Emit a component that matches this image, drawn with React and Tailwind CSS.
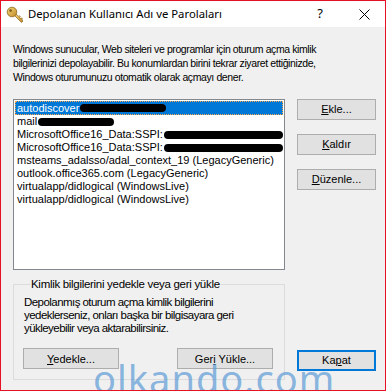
import React from 'react';

const ui = { fontFamily: '"Noto Sans", "Liberation Sans", sans-serif' };
const ms = { fontFamily: '"Liberation Sans", Arial, sans-serif' };

function KeyIcon() {
  return (
    <svg width="18" height="18" viewBox="0 0 18 18">
      <defs>
        <linearGradient id="kg" x1="0" y1="0" x2="1" y2="1">
          <stop offset="0" stopColor="#f6d97c" />
          <stop offset="1" stopColor="#c08a24" />
        </linearGradient>
      </defs>
      <path d="M8 9 L15.5 16.5 L17 15 L15.8 13.8 L16.6 13 L15.4 11.8 L14.6 12.6 L13.6 11.6 L14.4 10.8 L13.2 9.6 L12.4 10.4 L10 8" fill="url(#kg)" stroke="#8a6420" strokeWidth="0.7" strokeLinejoin="round" />
      <circle cx="6" cy="6" r="4.8" fill="url(#kg)" stroke="#8a6420" strokeWidth="0.8" />
      <circle cx="4.6" cy="4.6" r="1.3" fill="#7a5a1a" />
    </svg>
  );
}

function Btn({ children, className = '', primary = false }) {
  return (
    <div
      className={`flex items-center justify-center h-[21px] bg-[#e1e1e1] text-[11px] text-black ${
        primary ? 'border-2 border-[#0078d7]' : 'border border-[#adadad]'
      } ${className}`}
      style={ms}
    >
      {children}
    </div>
  );
}

function Redact({ w }) {
  return <span className={`inline-block h-[8px] ${w} bg-black rounded-full align-middle ml-[1px]`} />;
}

export default function App() {
  const items = [
    { text: 'autodiscover', redact: 'w-[86px]', selected: true },
    { text: 'mail', redact: 'w-[76px]' },
    { text: 'MicrosoftOffice16_Data:SSPI:', redact: 'w-[130px]' },
    { text: 'MicrosoftOffice16_Data:SSPI:', redact: 'w-[130px]' },
    { text: 'msteams_adalsso/adal_context_19 (LegacyGeneric)' },
    { text: 'outlook.office365.com (LegacyGeneric)' },
    { text: 'virtualapp/didlogical (WindowsLive)' },
    { text: 'virtualapp/didlogical (WindowsLive)' },
  ];

  return (
    <div className="relative w-[386px] h-[391px] border border-[#e81123] bg-[#f0f0f0] flex flex-col overflow-hidden">
      {/* title bar */}
      <div className="h-[26px] bg-white flex items-center shrink-0">
        <div className="ml-[5px] mt-[1px]">
          <KeyIcon />
        </div>
        <span className="ml-[4px] text-[11.3px] text-black" style={ui}>
          Depolanan Kullanıcı Adı ve Parolaları
        </span>
        <span className="ml-auto mr-[36px] text-[13px] text-black" style={ui}>?</span>
        <svg width="11" height="11" viewBox="0 0 11 11" className="mr-[15px]">
          <path d="M0.5 0.5 L10.5 10.5 M10.5 0.5 L0.5 10.5" stroke="#000" strokeWidth="1" />
        </svg>
      </div>

      {/* body */}
      <div className="flex flex-col pl-[12px] pr-[9px]">
        <p className="mt-[15px] text-[10.5px] leading-[14px] tracking-[-0.4px] text-black whitespace-nowrap" style={ms}>
          Windows sunucular, Web siteleri ve programlar için oturum açma kimlik
          <br />
          bilgilerinizi depolayabilir. Bu konumlardan birini tekrar ziyaret ettiğinizde,
          <br />
          Windows oturumunuzu otomatik olarak açmayı dener.
        </p>

        <div className="flex mt-[15px]">
          <div className="w-[272px] h-[171px] border border-[#828790] bg-white p-[1px] overflow-hidden">
            {items.map((it, i) => (
              <div
                key={i}
                className={`h-[13px] flex items-center pl-[2px] text-[11px] whitespace-nowrap ${
                  it.selected ? 'h-[14px] bg-[#0078d7] text-white outline-1 outline-dotted outline-[#f7a84a] -outline-offset-1' : 'text-black'
                }`}
                style={ms}
              >
                {it.text}
                {it.redact && <Redact w={it.redact} />}
              </div>
            ))}
          </div>
          <div className="ml-[12px] flex flex-col gap-[14px] w-[79px]">
            <Btn>
              <span><u>E</u>kle...</span>
            </Btn>
            <Btn>
              <span><u>K</u>aldır</span>
            </Btn>
            <Btn>
              <span><u>D</u>üzenle...</span>
            </Btn>
          </div>
        </div>

        <div className="flex mt-[6px] items-end">
          <fieldset className="w-[272px] h-[104px] border border-[#dcdcdc] pl-[9px] pr-[11px]">
            <legend className="ml-[7px] px-[1px] text-[11.5px] tracking-[-0.3px] text-black" style={ms}>
              Kimlik bilgilerini yedekle veya geri yükle
            </legend>
            <p className="mt-[3px] pl-[1px] text-[11.5px] leading-[13px] tracking-[-0.55px] text-black whitespace-nowrap" style={ms}>
              Depolanmış oturum açma kimlik bilgilerini
              <br />
              yedeklerseniz, onları başka bir bilgisayara geri
              <br />
              yükleyebilir veya aktarabilirsiniz.
            </p>
            <div className="flex justify-between mt-[13px]">
              <Btn className="w-[96px]">
                <span><u>Y</u>edekle...</span>
              </Btn>
              <Btn className="w-[96px]">
                <span>Ger<u>i</u> Yükle...</span>
              </Btn>
            </div>
          </fieldset>
          <div className="ml-[12px] mb-[9px] w-[79px]">
            <Btn primary>
              <span>Ka<u>p</u>at</span>
            </Btn>
          </div>
        </div>
      </div>

      {/* watermark */}
      <div
        className="absolute left-[92px] top-[353px] text-[38px] leading-[48px] tracking-[1px] text-[#5a9ad6]/70 pointer-events-none"
        style={ui}
      >
        olkando.com
      </div>
    </div>
  );
}
